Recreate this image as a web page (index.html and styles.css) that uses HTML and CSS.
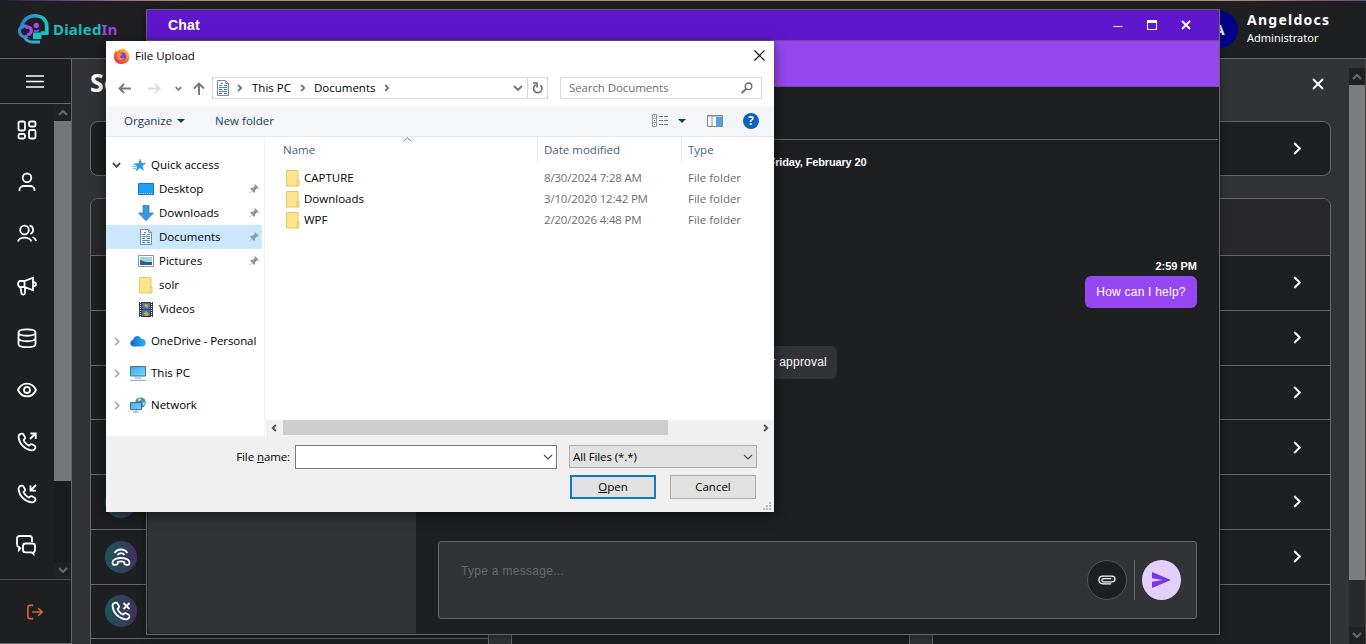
FILE: index.html
```html
<!DOCTYPE html>
<html lang="en">

<head>
    <meta charset="UTF-8">
    <meta name="viewport" content="width=device-width, initial-scale=1.0">
    <title>DialedIn</title>
    <link rel="stylesheet" href="styles.css">
</head>

<body>

    <!-- Shared icons -->
    <svg class="sprite" width="0" height="0">
        <defs>
            <linearGradient id="logoGrad" x1="0" y1="0" x2="1" y2="0">
                <stop offset="0" stop-color="#2f7fd0" />
                <stop offset="1" stop-color="#12c9c4" />
            </linearGradient>
            <linearGradient id="skyGrad" x1="0" y1="0" x2="1" y2="1">
                <stop offset="0" stop-color="#3fa9f0" />
                <stop offset="1" stop-color="#7cd4fb" />
            </linearGradient>
            <linearGradient id="cloudGrad" x1="0" y1="0" x2="1" y2="0">
                <stop offset="0" stop-color="#1560d4" />
                <stop offset="1" stop-color="#27b6fa" />
            </linearGradient>
            <linearGradient id="fireGrad" x1="1" y1="0" x2="0.2" y2="1">
                <stop offset="0" stop-color="#ffe03a" />
                <stop offset="0.5" stop-color="#ff7a28" />
                <stop offset="1" stop-color="#f0225c" />
            </linearGradient>
            <symbol id="chevron" viewBox="0 0 8 14">
                <path d="M1 1l6 6-6 6" fill="none" stroke="currentColor" stroke-width="2.2" />
            </symbol>
            <symbol id="arrow" viewBox="0 0 6 8">
                <path d="M1.2 1l3 3-3 3" fill="none" stroke="currentColor" stroke-width="1.8" />
            </symbol>
            <symbol id="caret" viewBox="0 0 10 6">
                <path d="M1 1l4 4 4-4" fill="none" stroke="currentColor" stroke-width="1.2" />
            </symbol>
            <symbol id="scroll" viewBox="0 0 10 7">
                <path d="M1 6l4-4 4 4" fill="none" stroke="currentColor" stroke-width="2.2" />
            </symbol>
            <symbol id="handset" viewBox="0 0 20 20">
                <path d="M4.900 1.700c-1.800.3-3.600 1.600-3.300 3.900.4 3.100 1.900 6 4.400 8.500s5.400 3.900 8.400 4.300c2.300.3 3.700-1.400 4-3 .1-.7-.2-1.200-.8-1.600l-2.500-1.500c-.7-.4-1.300-.3-1.800.2l-1.200 1.100c-1.200-.4-2.300-1.200-3.300-2.200S7 9.200 6.600 8l1.100-1.200c.5-.5.6-1.100.2-1.800L6.500 2.600c-.4-.7-.9-1-1.600-.9z" />
            </symbol>
            <symbol id="folder" viewBox="0 0 14 17">
                <path d="M.5.500h11.500v15.500H.5z" fill="#ffe48f" stroke="#e9c65c" />
                <path d="M11 10h2v6h-2z" fill="#ffe9a8" stroke="#e9c65c" />
            </symbol>
            <symbol id="doc" viewBox="0 0 14 16">
                <path d="M1.500.5h8l3 3v12h-11z" fill="#fff" stroke="#7e8a94" />
                <path d="M9.500.5v3h3" fill="none" stroke="#7e8a94" />
                <path d="M3 5.500h3M8 5.500h3M3 7.500h8M3 11.500h8" stroke="#3a93d6" stroke-width="1.200" />
                <path d="M3 9.500h3M8 9.500h3M3 13.500h3M8 13.500h3" stroke="#2470a8" />
                <path d="M5 3.500h2" stroke="#3a93d6" />
            </symbol>
            <symbol id="pin" viewBox="0 0 10 10">
                <path d="M6 0l4 4-1 .5-1 0-2 2 0 1.800-1 .7-2-2L.5 9.500 0 10l.5-1L3 6.500l-2-2 1-.8 1.700 0 2-2V.7z" fill="#8b99a5" />
            </symbol>
        </defs>
    </svg>

    <div class="app">
        <header class="topbar">
            <div class="logo">
                <svg width="32" height="31" viewBox="0 0 32 31">
                    <path d="M3.500 15C4 6 10 1.800 17 1.800c7.500 0 11.500 4.700 11.800 10.700v6.500h-6" fill="none" stroke="url(#logoGrad)" stroke-width="3.600" />
                    <path d="M15 18.500h15v2.500h-6.500v4H15z" fill="#16c2c6" />
                    <path d="M6 22.500c2 4.500 5 5.500 8.500 5.500h7.500" fill="none" stroke="#2bb0d0" stroke-width="2.800" />
                    <path d="M9 12.500c-5-2-8 2-7.500 5.500s4.500 6 8 4.500" fill="none" stroke="#2f8ed6" stroke-width="3.200" />
                    <path d="M7.500 13.500c7-2.500 8 6.500 1.500 7.500" fill="none" stroke="#a24bea" stroke-width="3.200" />
                    <circle cx="18.300" cy="11.500" r="2.700" fill="#a24bea" />
                    <path d="M16 16.500c2 1.300 4 1 5-.8" fill="none" stroke="#a24bea" stroke-width="1.500" />
                </svg>
                <span class="logo-text">Dialed<span class="logo-in">In</span></span>
            </div>
            <div class="user">
                <div class="avatar">A</div>
                <div class="user-info">
                    <div class="user-name">Angeldocs</div>
                    <div class="user-role">Administrator</div>
                </div>
            </div>
        </header>

        <aside class="sidebar">
            <div class="menu-toggle">
                <svg width="18" height="13" viewBox="0 0 18 13"><path d="M0 1h18M0 6.500h18M0 12h18" stroke="#fff" stroke-width="1.500" /></svg>
            </div>
            <div class="nav-area">
                <nav class="nav">
                    <div class="nav-item">
                        <svg width="20" height="20" viewBox="0 0 20 20"><rect x="1.500" y="1.500" width="6.500" height="9" rx="1.500" /><rect x="12" y="1.500" width="6.500" height="5" rx="1.500" /><rect x="1.500" y="14" width="6.500" height="4.500" rx="1.500" /><rect x="12" y="10" width="6.500" height="8.500" rx="1.500" /></svg>
                    </div>
                    <div class="nav-item">
                        <svg width="20" height="20" viewBox="0 0 20 20"><circle cx="10" cy="5.800" r="4.300" /><path d="M2.500 19v-1c0-2.500 2-4 4.300-4h6.400c2.300 0 4.300 1.500 4.300 4v1" /></svg>
                    </div>
                    <div class="nav-item">
                        <svg width="20" height="20" viewBox="0 0 20 20"><circle cx="7.500" cy="6" r="4.300" /><path d="M1 17.500c1.500-5.300 11.500-5.300 13.500 0M12.500 1.700c4.500.4 4.700 7 .8 8.300M15.500 13c1.800.6 3 1.900 3.700 4" /></svg>
                    </div>
                    <div class="nav-item">
                        <svg width="20" height="20" viewBox="0 0 20 20"><path d="M2.500 5h5l8.500-3.300v12.600L7.500 11h-5C.5 9.500.5 6.500 2.500 5zM7.500 5v6M16 6c4 .5 4 4 0 4.500M3.500 11l1 6.500c.3 1.500 3.500 1.500 3.500-.5v-6" /></svg>
                    </div>
                    <div class="nav-item">
                        <svg width="20" height="20" viewBox="0 0 20 20"><path d="M1.500 4.500c0-4.300 17-4.300 17 0s-17 4.300-17 0zM1.500 4.500v11.500c0 4.300 17 4.300 17 0V4.500M1.500 10c0 4.300 17 4.300 17 0" /></svg>
                    </div>
                    <div class="nav-item">
                        <svg width="20" height="20" viewBox="0 0 20 20"><path d="M1 10c4-8.500 14-8.500 18 0-4 8.500-14 8.500-18 0z" /><circle cx="10" cy="10" r="3" /></svg>
                    </div>
                    <div class="nav-item">
                        <svg width="20" height="20" viewBox="0 0 20 20"><use href="#handset" /><path d="M13 7l5-5M13.500 1.500H18.700V7" /></svg>
                    </div>
                    <div class="nav-item">
                        <svg width="20" height="20" viewBox="0 0 20 20"><use href="#handset" /><path d="M19 1l-5 5M13.500 1.500V6.700H19" /></svg>
                    </div>
                    <div class="nav-item chats">
                        <svg width="22" height="22" viewBox="0 0 22 22"><path d="M6 13.500l-2 2.500v-3C2.500 12.500 2 12 2 10.500v-6C2 3 3 2 4.500 2h10C16 2 17 3 17 4.500V8" /><path d="M10.500 9.500h7c1.700 0 2.500.8 2.500 2.500v4c0 1.500-.7 2-1.500 2.300V20l-2-1.700h-6C9 18.300 8 17.500 8 16v-4c0-1.700 1-2.500 2.500-2.500z" /></svg>
                    </div>
                </nav>
                <div class="nav-scroll">
                    <div class="scroll-btn"><svg width="10" height="7"><use href="#scroll" /></svg></div>
                    <div class="nav-thumb"></div>
                    <div class="scroll-btn down"><svg width="10" height="7"><use href="#scroll" /></svg></div>
                </div>
            </div>
            <div class="logout">
                <svg width="16" height="16" viewBox="0 0 17 16"><path d="M6.500 1H3C1.700 1 1 1.800 1 3v10c0 1.200.7 2 2 2h3.500M5.500 8H16M12 4l4 4-4 4" fill="none" stroke="#e2623f" stroke-width="1.700" /></svg>
            </div>
        </aside>

        <main class="main">
            <div class="main-head">
                <h1>Se</h1>
                <svg class="main-close" width="12" height="12" viewBox="0 0 12 12"><path d="M1 1l10 10M11 1L1 11" stroke="#fff" stroke-width="1.800" /></svg>
            </div>
            <div class="columns">
                <section class="column">
                    <div class="card single"></div>
                    <div class="card list">
                        <div class="list-head"></div>
                        <div class="row"></div>
                        <div class="row"></div>
                        <div class="row"></div>
                        <div class="row"></div>
                        <div class="row"><div class="call-icon"></div></div>
                        <div class="row">
                            <div class="call-icon">
                                <svg width="20" height="20" viewBox="0 0 20 20"><path d="M1.500 15.500c.5-6 16.500-6 17 0 0 2-1 2.500-2.500 2.300l-2-.5c-.8-.3-1-.8-.8-2.300-2-.7-4.400-.7-6.400 0 .2 1.500 0 2-.8 2.300l-2 .5c-1.500.2-2.500-.3-2.500-2.300zM3.500 6c3-4.700 10-4.700 13 0M6.500 8c2-2.500 5-2.500 7 0" /></svg>
                            </div>
                        </div>
                        <div class="row">
                            <div class="call-icon">
                                <svg width="20" height="20" viewBox="0 0 20 20"><use href="#handset" /><path d="M12.500 2l6 6M18.500 2l-6 6" /></svg>
                            </div>
                        </div>
                        <div class="row"></div>
                    </div>
                </section>
                <section class="column">
                    <div class="card single"></div>
                    <div class="card list"><div class="list-head"></div></div>
                </section>
                <section class="column">
                    <div class="card single"><svg class="chev" width="8" height="13"><use href="#chevron" /></svg></div>
                    <div class="card list">
                        <div class="list-head"></div>
                        <div class="row"><svg class="chev" width="8" height="13"><use href="#chevron" /></svg></div>
                        <div class="row"><svg class="chev" width="8" height="13"><use href="#chevron" /></svg></div>
                        <div class="row"><svg class="chev" width="8" height="13"><use href="#chevron" /></svg></div>
                        <div class="row"><svg class="chev" width="8" height="13"><use href="#chevron" /></svg></div>
                        <div class="row"><svg class="chev" width="8" height="13"><use href="#chevron" /></svg></div>
                        <div class="row"><svg class="chev" width="8" height="13"><use href="#chevron" /></svg></div>
                    </div>
                </section>
            </div>
        </main>

        <div class="page-scroll">
            <div class="scroll-btn"><svg width="10" height="7"><use href="#scroll" /></svg></div>
            <div class="page-thumb"></div>
            <div class="scroll-btn down"><svg width="10" height="7"><use href="#scroll" /></svg></div>
        </div>
    </div>

    <!-- Chat window -->
    <div class="chat">
        <div class="chat-title">
            <span>Chat</span>
            <div class="chat-controls">
                <svg width="10" height="10" viewBox="0 0 10 10"><path d="M.5 6.500h9" stroke="#fff" /></svg>
                <svg width="10" height="10" viewBox="0 0 10 10"><path d="M.5.500h9v9h-9z" fill="none" stroke="#fff" /><path d="M0 1.500h10" stroke="#fff" stroke-width="3" /></svg>
                <svg width="10" height="10" viewBox="0 0 10 10"><path d="M1 1l8 8M9 1L1 9" stroke="#fff" stroke-width="1.800" /></svg>
            </div>
        </div>
        <div class="chat-banner"></div>
        <div class="chat-body">
            <div class="chat-contacts"></div>
            <div class="chat-thread">
                <div class="thread-head"></div>
                <div class="thread-messages">
                    <div class="thread-date">Friday, February 20</div>
                    <div class="msg-time">2:59 PM</div>
                    <div class="bubble sent">How can I help?</div>
                    <div class="bubble received">r approval</div>
                </div>
                <div class="composer">
                    <div class="composer-text">Type a message...</div>
                    <div class="attach">
                        <svg width="18" height="10" viewBox="0 0 19 10"><path d="M14 9H5C-.300 9-.300 1 5 1h9.500c4.500 0 4.500 6 0 6H6C3.500 7 3.500 3.500 6 3.500h8" fill="none" stroke="#fff" stroke-width="1.400" /></svg>
                    </div>
                    <div class="composer-sep"></div>
                    <div class="send">
                        <svg width="19" height="16" viewBox="0 0 19 16"><path d="M0 0l19 8-19 8V9.800L11 8 0 6.200z" fill="#7a35e2" /></svg>
                    </div>
                </div>
            </div>
        </div>
    </div>

    <!-- File picker -->
    <div class="dialog">
        <div class="dialog-title">
            <svg width="16" height="16" viewBox="0 0 16 16"><path d="M6 1.500C8 2.200 9 .800 9.500 0c1 1.500 2.500 2.200 3.500 3.200 4 3.500 3.600 12.300-5 12.800C-1.500 16-1.500 6 2 2.200c.3 1 .8 1.300 1.500 1.500C4 2.600 5 1.900 6 1.500z" fill="url(#fireGrad)" /><circle cx="8.200" cy="8.300" r="3.900" fill="#7542e5" /><path d="M3.500 5.500c2-1 3-.5 4.500.5.800.5 0 1.500-2 2-.5 2 2 3 4.500 1.500-1 4-7 3-7.500 0z" fill="#ff8a2a" /></svg>
            <span>File Upload</span>
            <svg class="dialog-close" width="11" height="11" viewBox="0 0 11 11"><path d="M.5.500l10 10M10.500.500l-10 10" stroke="#000" stroke-width="1.100" /></svg>
        </div>

        <div class="dialog-nav">
            <svg class="nav-back" width="13" height="11" viewBox="0 0 13 11"><path d="M13 5.500H1.500M6 1L1.500 5.500 6 10" fill="none" stroke="#767676" stroke-width="1.800" /></svg>
            <svg class="nav-fwd" width="13" height="11" viewBox="0 0 13 11"><path d="M0 5.500h11.500M7 1l4.500 4.500L7 10" fill="none" stroke="#dcdcdc" stroke-width="1.800" /></svg>
            <svg class="nav-recent" width="7" height="5" viewBox="0 0 10 6"><path d="M1 1l4 4 4-4" fill="none" stroke="#767676" stroke-width="2.200" /></svg>
            <svg class="nav-up" width="12" height="13" viewBox="0 0 12 13"><path d="M6 13V1.500M1 6.500l5-5 5 5" fill="none" stroke="#767676" stroke-width="1.900" /></svg>
            <div class="address">
                <svg width="14" height="16"><use href="#doc" /></svg>
                <svg class="crumb-arrow" width="6" height="8"><use href="#arrow" /></svg>
                <span class="crumb">This PC</span>
                <svg class="crumb-arrow" width="6" height="8"><use href="#arrow" /></svg>
                <span class="crumb">Documents</span>
                <svg class="crumb-arrow" width="6" height="8"><use href="#arrow" /></svg>
                <svg class="address-drop" width="10" height="7" viewBox="0 0 10 7"><path d="M1 1l4 4 4-4" fill="none" stroke="#767676" stroke-width="1.900" /></svg>
                <div class="refresh">
                    <svg width="11" height="12" viewBox="0 0 11 12"><path d="M8.500 3.200a4.200 4.200 0 1 1-4.800-.4M1 1h4v4.500" fill="none" stroke="#6d6d6d" stroke-width="1.600" /></svg>
                </div>
            </div>
            <div class="search">
                <span>Search Documents</span>
                <svg width="12" height="12" viewBox="0 0 12 12"><circle cx="7.500" cy="4.300" r="3.300" fill="none" stroke="#6d6d6d" stroke-width="1.400" /><path d="M5 7L.5 11" stroke="#6d6d6d" stroke-width="1.900" /></svg>
            </div>
        </div>

        <div class="dialog-toolbar">
            <span class="organize">Organize</span>
            <svg class="tri" width="8" height="4" viewBox="0 0 8 4"><path d="M0 0h8L4 4z" fill="#1e395b" /></svg>
            <span class="new-folder">New folder</span>
            <svg class="view-list" width="17" height="14" viewBox="0 0 17 14"><path d="M.5.500h4v12h-4zM.5 4.500h4M.5 8.500h4" fill="#fff" stroke="#9a9a9a" /><path d="M7 2.500h4m1 0h4M7 6.500h4m1 0h4M7 10.500h4m1 0h4" stroke="#777" /><path d="M2 2.500h1M2 6.500h1" stroke="#3b8fd0" /><path d="M2 10.500h1" stroke="#d04a3b" /></svg>
            <svg class="tri view-tri" width="8" height="4" viewBox="0 0 8 4"><path d="M0 0h8L4 4z" fill="#1e395b" /></svg>
            <svg class="preview" width="16" height="12" viewBox="0 0 16 12"><path d="M.5.500h15v11H.5z" fill="#fff" stroke="#828a92" /><path d="M0 1h16M5 1v11" stroke="#828a92" /><path d="M9 2h6v9H9z" fill="#4ba3e6" /></svg>
            <div class="help">?</div>
        </div>

        <div class="dialog-body">
            <div class="tree">
                <div class="tree-item group open">
                    <svg class="twist" width="9" height="6" viewBox="0 0 10 6"><path d="M1 1l4 4 4-4" fill="none" stroke="#404040" stroke-width="2" /></svg>
                    <svg class="ico" width="14" height="13" viewBox="0 0 16 14"><path d="M9.500 0l1.200 4.500 4.800.2-4 2.700 1.500 5.100-4-2.900L5 13l1.200-4.500L3 5.200l4.600-.4z" fill="#2b9be8" stroke="#1b7fc4" stroke-width=".6" /><path d="M1 5.500h3M0 8h5M1 10.500h4" stroke="#4ab0ee" /></svg>
                    <span>Quick access</span>
                </div>
                <div class="tree-item">
                    <svg class="ico" width="16" height="12" viewBox="0 0 16 12"><path d="M.5.500h15v11H.5z" fill="#18a0fb" stroke="#1878b8" /><path d="M1 10.500h14" stroke="#9fd8ff" stroke-dasharray="1 1" /></svg>
                    <span>Desktop</span>
                    <svg class="pin" width="10" height="10"><use href="#pin" /></svg>
                </div>
                <div class="tree-item">
                    <svg class="ico" width="16" height="16" viewBox="0 0 16 16"><path d="M5 .500h6v7.500h4.500L8 15.700.5 8H5z" fill="#3c97e3" stroke="#2f7fc6" stroke-width=".8" /></svg>
                    <span>Downloads</span>
                    <svg class="pin" width="10" height="10"><use href="#pin" /></svg>
                </div>
                <div class="tree-item selected">
                    <svg class="ico" width="16" height="16"><use href="#doc" /></svg>
                    <span>Documents</span>
                    <svg class="pin" width="10" height="10"><use href="#pin" /></svg>
                </div>
                <div class="tree-item">
                    <svg class="ico" width="16" height="12" viewBox="0 0 16 12"><path d="M.5.500h15v11H.5z" fill="#fff" stroke="#8e989f" /><path d="M2 2h12v8H2z" fill="#9fd0ee" /><path d="M2 5l6 2 6 0v3H2z" fill="#2f6278" /></svg>
                    <span>Pictures</span>
                    <svg class="pin" width="10" height="10"><use href="#pin" /></svg>
                </div>
                <div class="tree-item">
                    <svg class="ico" width="16" height="17"><use href="#folder" /></svg>
                    <span>solr</span>
                </div>
                <div class="tree-item">
                    <svg class="ico" width="16" height="15" viewBox="0 0 16 15"><path d="M1 0h14v15H1z" fill="#3a3a3a" /><path d="M2.500 0v15M13.500 0v15" stroke="#fff" stroke-dasharray="1 1" /><path d="M4 1h8v6H4zM4 8h8v6H4z" fill="#3f6fc8" /><path d="M7 2l4 1-2 3-3-2zM5 12l3-3 3 3-2 2z" fill="#d7a72a" /></svg>
                    <span>Videos</span>
                </div>
                <div class="tree-item group">
                    <svg class="twist" width="6" height="9" viewBox="0 0 6 9"><path d="M1 .800l3.700 3.700L1 8.200" fill="none" stroke="#a6a6a6" stroke-width="1.600" /></svg>
                    <svg class="ico" width="16" height="12" viewBox="0 0 16 12"><path d="M4 11.500C-.500 11.500-1 6 3 5 4 .500 9.500-.500 11.300 3.800c5.500-.3 6 7.200 1.200 7.700z" fill="url(#cloudGrad)" /></svg>
                    <span class="tight">OneDrive - Personal</span>
                </div>
                <div class="tree-item group">
                    <svg class="twist" width="6" height="9" viewBox="0 0 6 9"><path d="M1 .800l3.700 3.700L1 8.200" fill="none" stroke="#a6a6a6" stroke-width="1.600" /></svg>
                    <svg class="ico" width="16" height="15" viewBox="0 0 16 15"><path d="M.5.500h15v9.500H.5z" fill="url(#skyGrad)" stroke="#37789f" /><path d="M4.500 12h7M0 14.300h16" stroke="#8da0ae" /></svg>
                    <span>This PC</span>
                </div>
                <div class="tree-item group">
                    <svg class="twist" width="6" height="9" viewBox="0 0 6 9"><path d="M1 .800l3.700 3.700L1 8.200" fill="none" stroke="#a6a6a6" stroke-width="1.600" /></svg>
                    <svg class="ico" width="16" height="16" viewBox="0 0 16 16"><circle cx="10.500" cy="5.500" r="5.300" fill="#4f8dab" /><path d="M8 2.500c1-2 4-1.500 3 0s-2 2.500-3 1zM12.500 6c1.500-2 2.500-1 2.500 1l-2 1.500z" fill="#c3dbe4" /><path d="M.5 5.500h11v7H.5z" fill="url(#skyGrad)" stroke="#2f73a3" /><path d="M3 15h6M6 13v2" stroke="#7c9db3" /></svg>
                    <span>Network</span>
                </div>
            </div>

            <div class="files">
                <div class="files-head">
                    <span class="col-name">Name</span>
                    <svg class="sort" width="9" height="5" viewBox="0 0 9 5"><path d="M.7 4.500l3.800-3.700 3.800 3.700" fill="none" stroke="#707070" /></svg>
                    <span class="col-date">Date modified</span>
                    <span class="col-type">Type</span>
                </div>
                <div class="files-list">
                    <div class="file"><svg width="14" height="17"><use href="#folder" /></svg><span class="file-name">CAPTURE</span><span class="file-date">8/30/2024 7:28 AM</span><span>File folder</span></div>
                    <div class="file"><svg width="14" height="17"><use href="#folder" /></svg><span class="file-name">Downloads</span><span class="file-date">3/10/2020 12:42 PM</span><span>File folder</span></div>
                    <div class="file"><svg width="14" height="17"><use href="#folder" /></svg><span class="file-name">WPF</span><span class="file-date">2/20/2026 4:48 PM</span><span>File folder</span></div>
                </div>
                <div class="h-scroll">
                    <svg class="h-left" width="6" height="8"><use href="#arrow" /></svg>
                    <div class="h-thumb"></div>
                    <svg class="h-right" width="6" height="8"><use href="#arrow" /></svg>
                </div>
            </div>
        </div>

        <div class="dialog-footer">
            <div class="footer-row">
                <span class="file-label">File <u>n</u>ame:</span>
                <div class="file-input"><svg width="10" height="6"><use href="#caret" /></svg></div>
                <div class="file-type"><span>All Files (*.*)</span><svg width="10" height="6"><use href="#caret" /></svg></div>
            </div>
            <div class="footer-row buttons">
                <button class="btn primary"><u>O</u>pen</button>
                <button class="btn">Cancel</button>
            </div>
            <svg class="grip" width="8" height="8" viewBox="0 0 8 8"><path d="M6 0h2v2H6zM3 3h2v2H3zM6 3h2v2H6zM0 6h2v2H0zM3 6h2v2H3zM6 6h2v2H6z" fill="#bfbfbf" /></svg>
        </div>
    </div>

</body>

</html>
```
FILE: styles.css
```css
* {
    box-sizing: border-box;
}

body {
    margin: 0;
    width: 1366px;
    height: 644px;
    overflow: hidden;
    position: relative;
    background-color: #1e1f21;
    color: #fff;
    font-family: "Noto Sans", sans-serif;
}

svg {
    display: block;
    flex-shrink: 0;
}

.sprite {
    position: absolute;
}

/* App */
.app {
    height: 644px;
    display: grid;
    grid-template-columns: 72px 1277px 17px;
    grid-template-rows: 59px 585px;
}

.topbar {
    grid-column: 1 / 4;
    display: flex;
    justify-content: space-between;
    border-bottom: 1px solid #66676a;
    background: linear-gradient(90deg, #20182c, #71449b 5%, #a46a86 9%, #b3917c 14%, #b3917c 90%, #94566f 96%, #62509a) top / 100% 1px no-repeat #1e1f21;
}

.logo {
    display: flex;
    align-items: center;
    padding-left: 18px;
}

.logo-text {
    margin-left: 3px;
    font-size: 15px;
    font-weight: 700;
    letter-spacing: 0.2px;
    color: #17bcc4;
}

.logo-in {
    color: #9a48e0;
}

.user {
    display: flex;
    width: 165px;
    padding-top: 11px;
}

.avatar {
    width: 37px;
    height: 37px;
    line-height: 37px;
    border-radius: 50%;
    background-color: #00008b;
    text-align: center;
    font-size: 15px;
    font-weight: 700;
}

.user-info {
    margin-left: 9px;
}

.user-name {
    font-size: 14px;
    font-weight: 700;
    line-height: 18px;
    letter-spacing: 1.25px;
}

.user-role {
    font-size: 11px;
    line-height: 18px;
}

/* Sidebar */
.sidebar {
    display: flex;
    flex-direction: column;
    background-color: #1e1f21;
    border-right: 1px solid #66676a;
    border-bottom: 1px solid #66676a;
}

.menu-toggle {
    height: 45px;
    display: flex;
    justify-content: center;
    align-items: center;
    padding-right: 2px;
    border-bottom: 1px solid #66676a;
}

.nav-area {
    display: flex;
    height: 475px;
}

.nav {
    width: 54px;
    height: 475px;
    overflow: hidden;
}

.nav-item {
    height: 52px;
    display: flex;
    align-items: center;
    justify-content: center;
}

.nav-item.chats {
    padding: 0 2px 2px 0;
}

.nav-item svg,
.call-icon svg {
    fill: none;
    stroke: #fff;
    stroke-width: 1.8;
}

.nav-scroll {
    width: 17px;
    display: flex;
    flex-direction: column;
    background-color: #1b1c20;
}

.scroll-btn {
    height: 17px;
    display: flex;
    align-items: center;
    justify-content: center;
    background-color: #202124;
    color: #66676b;
}

.scroll-btn.down {
    margin-top: auto;
}

.scroll-btn.down svg {
    transform: rotate(180deg);
}

.nav-thumb {
    height: 360px;
    background-color: #757678;
}

.logout {
    flex: 1;
    display: flex;
    align-items: center;
    padding-left: 27px;
    border-top: 1px solid #4b4c4f;
}

/* Main */
.main {
    background-color: #323337;
    padding: 0 18px;
    overflow: hidden;
}

.main-head {
    height: 62px;
    display: flex;
    justify-content: space-between;
    align-items: flex-start;
}

h1 {
    margin: 0;
    padding-top: 6px;
    font-size: 25px;
    line-height: 34px;
}

.main-close {
    margin: 19px 7px 0 0;
}

.columns {
    display: grid;
    grid-template-columns: 399px 399px 399px;
    gap: 22px;
}

.card {
    background-color: #1e1f21;
    border: 1px solid #66676a;
    border-radius: 8px;
}

.single {
    height: 55px;
    margin-bottom: 22px;
    display: flex;
    align-items: center;
    justify-content: flex-end;
}

.chev {
    color: #fff;
    margin-right: 29px;
}

.list {
    height: 480px;
    overflow: hidden;
}

.list-head {
    height: 57px;
    background-color: #29292b;
    border-bottom: 1px solid #66676a;
}

.row {
    height: 54.75px;
    display: flex;
    align-items: center;
    border-bottom: 1px solid #66676a;
}

.row .chev {
    margin-left: auto;
}

.call-icon {
    width: 32px;
    height: 32px;
    margin-left: 14px;
    border-radius: 50%;
    display: flex;
    align-items: center;
    justify-content: center;
    background: linear-gradient(90deg, #1b555a, #40315e);
}

.page-scroll {
    display: flex;
    flex-direction: column;
    padding-top: 9px;
    background: linear-gradient(#323337 9px, #28292c 9px);
    border-right: 1px solid #47443f;
}

.page-thumb {
    height: 495px;
    background-color: #7c7d80;
}

/* Chat window */
.chat {
    position: absolute;
    left: 146px;
    top: 9px;
    width: 1074px;
    height: 626px;
    border: 1px solid #66676a;
    background-color: #1e1f21;
    box-shadow: 0 2px 8px rgba(0, 0, 0, 0.4);
    font-family: "Liberation Sans", Arial, sans-serif;
    display: flex;
    flex-direction: column;
}

.chat-title {
    height: 31px;
    display: flex;
    justify-content: space-between;
    align-items: center;
    padding: 0 28px 0 21px;
    background-color: #5f17ce;
    border-bottom: 1px solid #67509a;
    font-size: 14px;
    font-weight: 700;
    letter-spacing: 0.2px;
}

.chat-controls {
    display: flex;
    gap: 24px;
}

.chat-banner {
    height: 46px;
    background-color: #9747f2;
    border-bottom: 1px solid #6b5590;
}

.chat-body {
    flex: 1;
    display: flex;
    padding: 0 1px 1px;
}

.chat-contacts {
    width: 268px;
    background-color: #323337;
    border-bottom-left-radius: 4px;
}

.chat-thread {
    flex: 1;
    display: flex;
    flex-direction: column;
}

.thread-head {
    height: 53px;
    border-bottom: 1px solid #66676a;
}

.thread-messages {
    height: 401px;
    padding: 15px 21px 0 22px;
    display: flex;
    flex-direction: column;
}

.thread-date {
    font-size: 11px;
    font-weight: 700;
    line-height: 14px;
    text-align: center;
    letter-spacing: -0.15px;
}

.msg-time {
    margin-top: 90px;
    font-size: 11px;
    font-weight: 700;
    line-height: 14px;
    text-align: right;
}

.bubble {
    height: 32px;
    line-height: 32px;
    border-radius: 6px;
    font-size: 12px;
    letter-spacing: 0.22px;
}

.sent {
    align-self: flex-end;
    width: 112px;
    margin-top: 3px;
    text-align: center;
    background-color: #9747f2;
}

.received {
    align-self: flex-start;
    width: 399px;
    height: 33px;
    margin-top: 38px;
    padding-right: 10px;
    text-align: right;
    background-color: #323337;
}

.composer {
    height: 78px;
    margin: 0 21px 0 22px;
    padding: 0 15px 0 22px;
    display: flex;
    align-items: center;
    background-color: #323337;
    border: 1px solid #66676a;
    border-radius: 3px;
}

.composer-text {
    flex: 1;
    align-self: flex-start;
    padding-top: 21px;
    font-size: 12px;
    line-height: 16px;
    letter-spacing: 0.3px;
    color: #696a6c;
}

.attach,
.send {
    width: 40px;
    height: 40px;
    border-radius: 50%;
    display: flex;
    align-items: center;
    justify-content: center;
}

.attach {
    background-color: #1e1f21;
    border: 1px solid #55565a;
}

.composer-sep {
    width: 1px;
    height: 40px;
    margin: 0 7px;
    background-color: #66676a;
}

.send {
    width: 39px;
    background-color: #e3d0fe;
}

/* File dialog */
.dialog {
    position: absolute;
    left: 106px;
    top: 41px;
    width: 668px;
    height: 471px;
    background-color: #fff;
    color: #000;
    font-family: "Open Sans", sans-serif;
    font-size: 11.5px;
    line-height: 16px;
    box-shadow: 0 2px 12px rgba(0, 0, 0, 0.55);
    display: flex;
    flex-direction: column;
}

.dialog span {
    white-space: nowrap;
}

.dialog-title {
    height: 30px;
    padding: 0 9px 1px 8px;
    display: flex;
    align-items: center;
    gap: 5px;
}

.dialog-close {
    margin-left: auto;
}

.dialog-nav {
    height: 35px;
    display: flex;
    align-items: center;
    padding-left: 12px;
}

.nav-fwd {
    margin-left: 17px;
}

.nav-recent {
    margin-left: 14px;
}

.nav-up {
    margin-left: 11px;
}

.address,
.search {
    height: 22px;
    border: 1px solid #d9d9d9;
    display: flex;
    align-items: center;
    margin-bottom: 1px;
}

.address {
    width: 336px;
    margin-left: 7px;
    padding-left: 3px;
}

.crumb-arrow {
    margin: 0 9px 0 7px;
    color: #767676;
}

.crumb + .crumb-arrow {
    margin: 0 8px 0 9px;
}

.address-drop {
    margin-left: auto;
    margin-right: 4px;
}

.refresh {
    width: 20px;
    height: 20px;
    display: flex;
    align-items: center;
    justify-content: center;
    border-left: 1px solid #d9d9d9;
}

.search {
    width: 202px;
    margin-left: 12px;
    padding: 0 8px;
    justify-content: space-between;
    color: #6d6d6d;
    letter-spacing: -0.1px;
}

.dialog-toolbar {
    height: 31px;
    display: flex;
    align-items: center;
    padding: 0 15px 0 18px;
    background-color: #f4f6f9;
    border-bottom: 1px solid #e5e7ea;
    color: #1e395b;
}

.organize {
    width: 53px;
}

.new-folder {
    margin-left: 30px;
}

.view-list {
    margin-left: auto;
}

.view-tri {
    margin-left: 9px;
}

.preview {
    margin-left: 21px;
}

.help {
    width: 16px;
    height: 16px;
    margin-left: 20px;
    border-radius: 50%;
    background-color: #0b63bd;
    color: #fff;
    font-weight: 700;
    text-align: center;
}

.dialog-body {
    height: 299px;
    display: flex;
}

/* Tree */
.tree {
    width: 159px;
    padding-top: 16px;
    border-right: 1px solid #f3f3f3;
}

.tree-item {
    width: 156px;
    height: 24px;
    padding: 0 3px 0 32px;
    display: flex;
    align-items: center;
    gap: 5px;
}

.tree-item.group {
    padding-left: 8px;
    margin-top: 8px;
}

.tree-item.open {
    padding-left: 6px;
    margin-top: 0;
}

.twist {
    margin-right: 5px;
}

.open .twist {
    margin-right: 6px;
}

.tight {
    letter-spacing: -0.1px;
}

.selected {
    background-color: #cce8ff;
}

.pin {
    margin-left: auto;
}

/* Files */
.files {
    width: 509px;
    display: flex;
    flex-direction: column;
}

.files-head {
    height: 25px;
    display: flex;
    line-height: 25px;
    color: #4c607a;
}

.col-name {
    width: 138px;
    padding-left: 18px;
}

.sort {
    width: 9px;
    margin-right: 125px;
}

.col-date {
    width: 144px;
    padding-left: 6px;
    border-left: 1px solid #e5e5e5;
}

.col-type {
    padding-left: 6px;
    border-left: 1px solid #e5e5e5;
}

.files-list {
    padding-top: 6px;
    flex: 1;
}

.file {
    height: 21px;
    padding: 0 0 1px 21px;
    display: flex;
    align-items: center;
    color: #6d6d6d;
}

.file-name {
    width: 240px;
    padding-left: 4px;
    color: #000;
}

.file-date {
    width: 148px;
    padding-left: 4px;
    letter-spacing: -0.18px;
}

.h-scroll {
    height: 16px;
    margin-left: 1px;
    display: flex;
    align-items: center;
    padding: 0 5px 1px 5px;
    background-color: #f0f0f0;
    color: #505050;
}

.h-left {
    transform: rotate(180deg);
}

.h-thumb {
    width: 385px;
    height: 15px;
    margin-left: 6px;
    background-color: #cdcdcd;
}

.h-right {
    margin-left: auto;
}

/* Footer */
.dialog-footer {
    flex: 1;
    position: relative;
    padding: 9px 17px 0 0;
    background-color: #f0f0f0;
}

.footer-row {
    display: flex;
    justify-content: flex-end;
}

.file-label {
    margin-right: 5px;
    line-height: 23px;
    letter-spacing: -0.1px;
}

.file-input {
    width: 262px;
    height: 24px;
    display: flex;
    align-items: center;
    justify-content: flex-end;
    padding-right: 3px;
    background-color: #fff;
    border: 1px solid #7a7a7a;
    color: #505050;
}

.file-type {
    width: 188px;
    height: 23px;
    margin-left: 12px;
    padding: 0 3px;
    display: flex;
    align-items: center;
    justify-content: space-between;
    background-color: #e1e1e1;
    border: 1px solid #adadad;
    letter-spacing: -0.1px;
}

.file-type svg {
    color: #505050;
}

.buttons {
    gap: 14px;
    margin-top: 6px;
    padding-right: 1px;
}

.btn {
    width: 86px;
    height: 24px;
    padding: 0 0 2px;
    background-color: #e1e1e1;
    border: 1px solid #adadad;
    font-family: inherit;
    font-size: inherit;
    color: #000;
}

.btn.primary {
    border: 2px solid #0f78c8;
}

.grip {
    position: absolute;
    right: 3px;
    bottom: 2px;
}
```
